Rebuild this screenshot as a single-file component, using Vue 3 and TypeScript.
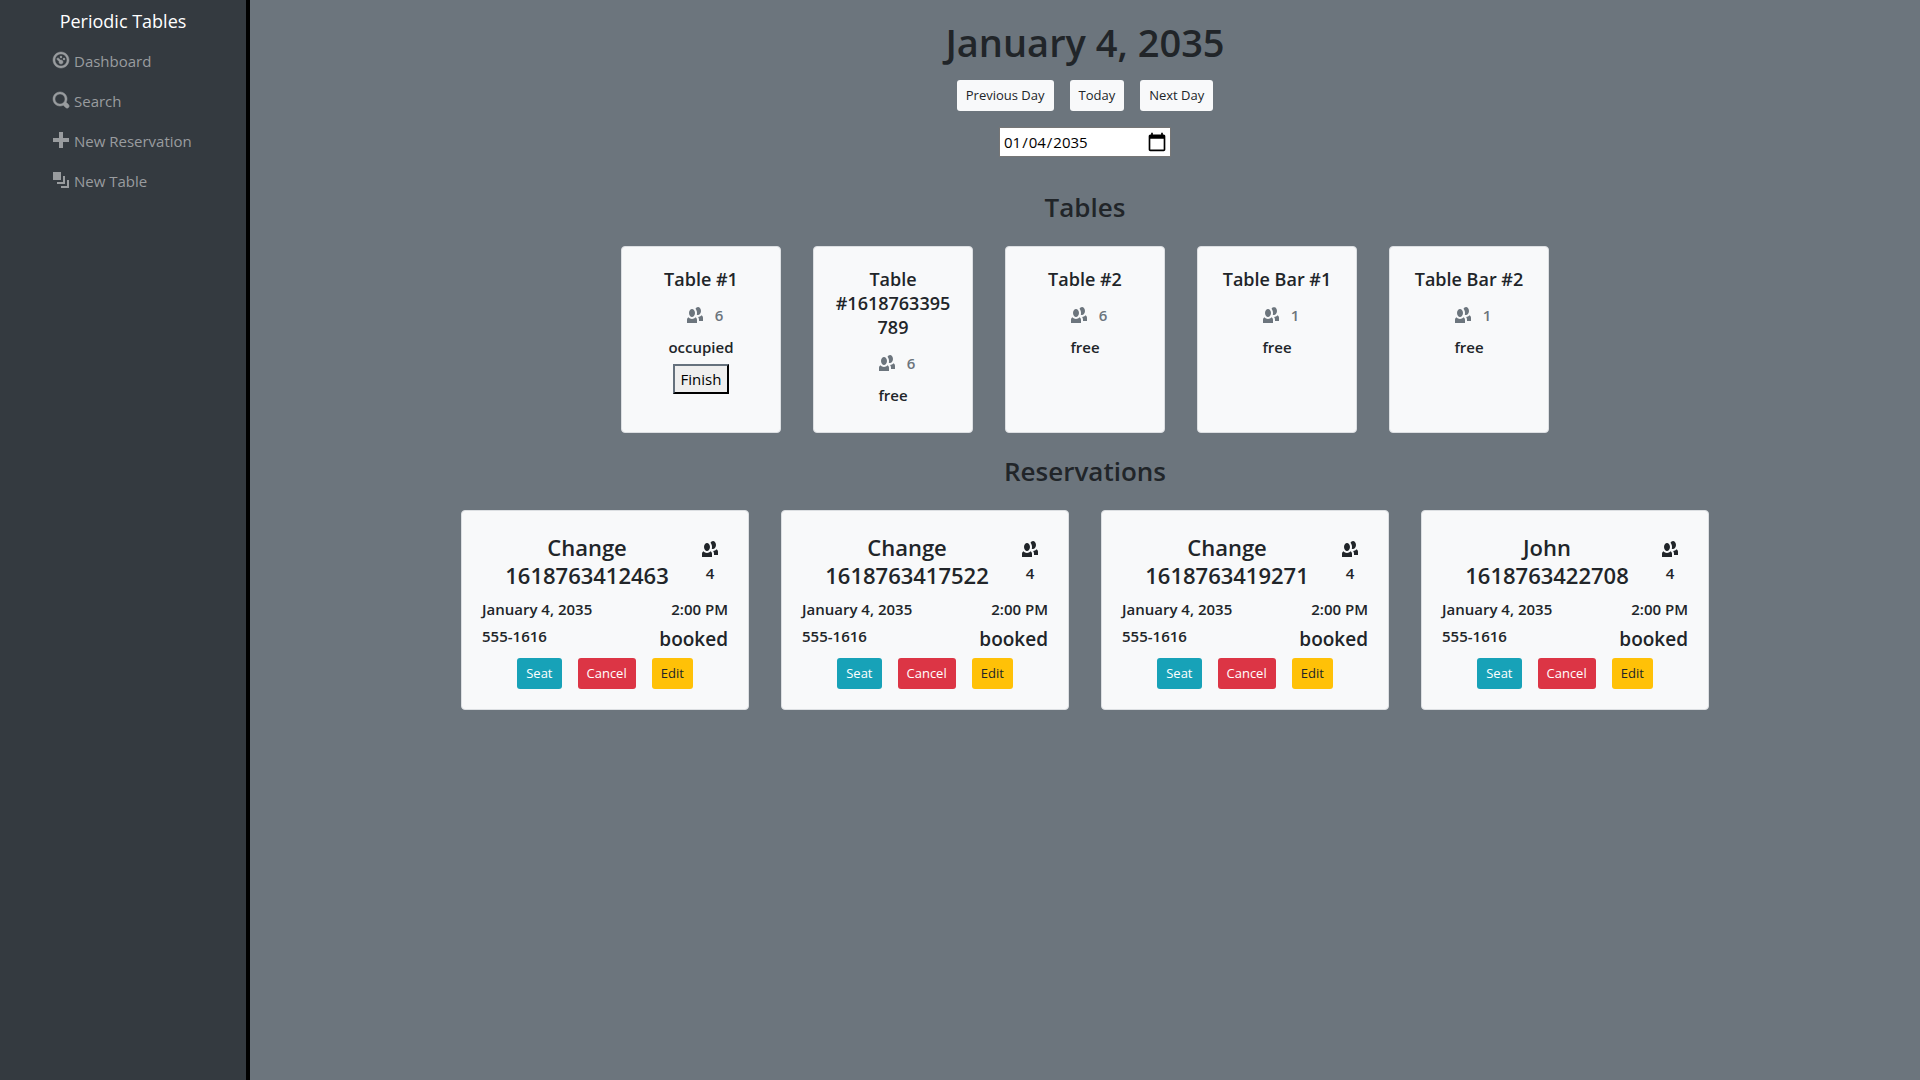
<script setup lang="ts">
import { ref } from 'vue'

interface NavItem {
  label: string
  icon: string
  outlined?: boolean
}

interface DiningTable {
  name: string
  capacity: number
  status: 'free' | 'occupied'
}

interface Reservation {
  first: string
  last: string
  people: number
  date: string
  time: string
  phone: string
  status: string
}

const peopleIcon =
  'M5.5 0c-.51 0-.95.35-1.22.88.45.54.72 1.275.72 2.125 0 .29-.03.55-.09.81.19.11.38.19.59.19.83 0 1.5-.9 1.5-2s-.67-2-1.5-2zm-3 1c-.828 0-1.5.895-1.5 2s.672 2 1.5 2 1.5-.895 1.5-2-.672-2-1.5-2zm4.75 3.16c-.43.51-1.02.82-1.69.84.27.38.44.84.44 1.34v.66h2v-1.66c0-.52-.31-.97-.75-1.19zm-6.5 1c-.44.22-.75.67-.75 1.19v1.66h5v-1.66c0-.52-.31-.97-.75-1.19-.45.53-1.06.84-1.75.84s-1.3-.32-1.75-.84z'

const navItems: NavItem[] = [
  {
    label: 'Dashboard',
    outlined: true,
    icon: 'M4 0c-2.2 0-4 1.8-4 4s1.8 4 4 4 4-1.8 4-4-1.8-4-4-4zm0 1c1.66 0 3 1.34 3 3s-1.34 3-3 3-3-1.34-3-3 1.34-3 3-3zm0 1c-.28 0-.5.22-.5.5s.22.5.5.5.5-.22.5-.5-.22-.5-.5-.5zm-1.66 1a.5.5 0 0 0-.19.84l.91.91c-.02.08-.06.16-.06.25 0 .55.45 1 1 1s1-.45 1-1-.45-1-1-1c-.09 0-.17.04-.25.06l-.91-.91a.5.5 0 0 0-.44-.16.5.5 0 0 0-.06 0zm3.16 0c-.28 0-.5.22-.5.5s.22.5.5.5.5-.22.5-.5-.22-.5-.5-.5z',
  },
  {
    label: 'Search',
    outlined: true,
    icon: 'M3.5 0c-1.93 0-3.5 1.57-3.5 3.5s1.57 3.5 3.5 3.5c.59 0 1.17-.14 1.66-.41a1 1 0 0 0 .13.13l1 1a1.02 1.02 0 1 0 1.44-1.44l-1-1a1 1 0 0 0-.16-.13c.27-.49.44-1.06.44-1.66 0-1.93-1.55-3.5-3.5-3.5zm0 1c1.39 0 2.5 1.11 2.5 2.5 0 .66-.24 1.27-.66 1.72-.01.01-.02.02-.03.03a1 1 0 0 0-.13.13c-.44.4-1.04.63-1.69.63-1.39 0-2.5-1.11-2.5-2.5s1.11-2.5 2.5-2.5z',
  },
  { label: 'New Reservation', icon: 'M3 0v3h-3v2h3v3h2v-3h3v-2h-3v-3h-2z' },
  {
    label: 'New Table',
    icon: 'M0 0v4h4v-4h-4zm5 2v3h-3v1h4v-4h-1zm2 2v3h-3v1h4v-4h-1z',
  },
]

const tables: DiningTable[] = [
  { name: 'Table #1', capacity: 6, status: 'occupied' },
  { name: 'Table #1618763395789', capacity: 6, status: 'free' },
  { name: 'Table #2', capacity: 6, status: 'free' },
  { name: 'Table Bar #1', capacity: 1, status: 'free' },
  { name: 'Table Bar #2', capacity: 1, status: 'free' },
]

const guests = [
  ['Change', '1618763412463'],
  ['Change', '1618763417522'],
  ['Change', '1618763419271'],
  ['John', '1618763422708'],
]

const reservations: Reservation[] = guests.map(([first, last]) => ({
  first,
  last,
  people: 4,
  date: 'January 4, 2035',
  time: '2:00 PM',
  phone: '555-1616',
  status: 'booked',
}))

const date = ref('2035-01-04')
</script>

<template>
  <div class="layout">
    <nav class="sidebar">
      <a class="brand" href="#">Periodic Tables</a>
      <ul class="nav-list">
        <li v-for="item in navItems" :key="item.label">
          <a class="nav-link" href="#">
            <svg class="icon" :class="{ outlined: item.outlined }" viewBox="0 0 8 8" aria-hidden="true">
              <path :d="item.icon" />
            </svg>
            <span>{{ item.label }}</span>
          </a>
        </li>
      </ul>
    </nav>

    <main class="content">
      <h1>January 4, 2035</h1>
      <div class="actions">
        <button class="btn light" type="button">Previous Day</button>
        <button class="btn light" type="button">Today</button>
        <button class="btn light" type="button">Next Day</button>
      </div>
      <input v-model="date" class="date" type="date" aria-label="Date" />

      <h2 class="tables-title">Tables</h2>
      <section class="cards">
        <article v-for="table in tables" :key="table.name" class="card table-card">
          <h3>{{ table.name }}</h3>
          <p class="capacity">
            <svg class="icon" viewBox="0 0 8 8" aria-hidden="true"><path :d="peopleIcon" /></svg>
            <span>{{ table.capacity }}</span>
          </p>
          <p class="status">{{ table.status }}</p>
          <button v-if="table.status === 'occupied'" class="finish" type="button">Finish</button>
        </article>
      </section>

      <h2 class="reservations-title">Reservations</h2>
      <section class="cards">
        <article v-for="r in reservations" :key="r.last" class="card reservation-card">
          <header class="guest">
            <h3>{{ r.first }} {{ r.last }}</h3>
            <p class="party">
              <svg class="icon" viewBox="0 0 8 8" aria-hidden="true"><path :d="peopleIcon" /></svg>
              <span>{{ r.people }}</span>
            </p>
          </header>
          <div class="row">
            <span>{{ r.date }}</span>
            <span>{{ r.time }}</span>
          </div>
          <div class="row">
            <span>{{ r.phone }}</span>
            <span class="booked">{{ r.status }}</span>
          </div>
          <div class="actions">
            <button class="btn info" type="button">Seat</button>
            <button class="btn danger" type="button">Cancel</button>
            <button class="btn warning" type="button">Edit</button>
          </div>
        </article>
      </section>
    </main>
  </div>
</template>

<style>
body {
  margin: 0;
  background: #6c757d;
}
</style>

<style scoped>
.layout {
  display: flex;
  min-height: 100vh;
  box-sizing: border-box;
  background: #6c757d;
  color: #212529;
  font-family: 'Open Sans', 'Noto Sans', sans-serif;
  font-size: 15px;
  line-height: 24px;
}

h1,
h2,
h3,
p,
ul {
  margin: 0;
  padding: 0;
  font-weight: 600;
}

button,
input {
  font-family: inherit;
}

.icon {
  width: 16px;
  height: 16px;
  flex: none;
  fill: currentColor;
}

.sidebar {
  box-sizing: border-box;
  width: 250px;
  flex: none;
  border-right: 4px solid #000;
  background: #343a40;
}

.brand {
  display: block;
  padding: 6px 0 5px;
  color: #fff;
  font-size: 18px;
  line-height: 30px;
  text-align: center;
  text-decoration: none;
}

.nav-list {
  list-style: none;
  font-weight: 400;
}

.nav-link {
  display: flex;
  align-items: center;
  gap: 5px;
  padding: 8px 0 8px 53px;
  color: #999c9f;
  text-decoration: none;
}

.nav-link .icon {
  margin-bottom: 2px;
  overflow: visible;
}

.outlined {
  stroke: currentColor;
  stroke-width: 0.25;
}

.content {
  display: flex;
  flex: 1;
  min-width: 0;
  flex-direction: column;
  align-items: center;
  padding: 18px 16px;
}

h1 {
  font-size: 38px;
  line-height: 48px;
}

h2 {
  font-size: 26px;
  line-height: 34px;
}

.content > .actions {
  margin-top: 14px;
}

.actions {
  display: flex;
  justify-content: center;
  gap: 16px;
}

.btn {
  height: 31px;
  padding: 0 8px;
  border: 1px solid transparent;
  border-radius: 3px;
  font-size: 13px;
  line-height: 21px;
}

.light {
  background: #f8f9fa;
  color: #212529;
}

.info {
  background: #17a2b8;
  color: #fff;
}

.danger {
  background: #dc3545;
  color: #fff;
}

.warning {
  background: #ffc107;
  color: #212529;
}

.date {
  box-sizing: border-box;
  width: 172px;
  height: 30px;
  margin-top: 16px;
  padding: 0 3px;
  border: 1px solid #767676;
  background: #fff;
  color: #000;
  font-size: 15px;
}

.date::-webkit-calendar-picker-indicator {
  width: 20px;
  height: 20px;
  padding: 0;
  background-size: 20px 20px;
}

.tables-title {
  margin: 33px 0 22px;
}

.reservations-title {
  margin: 21px 0 22px;
}

.cards {
  display: flex;
  flex-wrap: wrap;
  justify-content: center;
  gap: 32px;
}

.card {
  box-sizing: border-box;
  padding: 20px;
  border: 1px solid #dcdfe2;
  border-radius: 4px;
  background: #f8f9fa;
}

.table-card {
  width: 160px;
  text-align: center;
}

.table-card h3 {
  font-size: 18px;
  line-height: 24px;
  overflow-wrap: anywhere;
}

.capacity {
  display: flex;
  align-items: center;
  justify-content: center;
  gap: 12px;
  margin: 12px 0 9px;
  padding-left: 8px;
  color: #6c757d;
}

.status {
  margin-bottom: 6px;
  line-height: 22px;
}

.finish {
  height: 30px;
  padding: 0 6px;
  border: 2px outset #212529;
  background: #efefef;
  color: #000;
  font-size: 15px;
  line-height: 24px;
}

.reservation-card {
  width: 288px;
}

.guest {
  display: flex;
  margin-bottom: 8px;
  padding-top: 2px;
}

.guest h3 {
  flex: 1;
  font-size: 22px;
  line-height: 28px;
  text-align: center;
}

.party {
  display: flex;
  width: 36px;
  flex-direction: column;
  align-items: center;
  gap: 6px;
  padding-top: 8px;
  line-height: 20px;
}

.row {
  display: flex;
  align-items: flex-start;
  justify-content: space-between;
  font-weight: 600;
}

.row + .row {
  margin-top: 3px;
}

.booked {
  font-size: 19px;
  line-height: 30px;
}

.row + .actions {
  margin-top: 4px;
}
</style>
